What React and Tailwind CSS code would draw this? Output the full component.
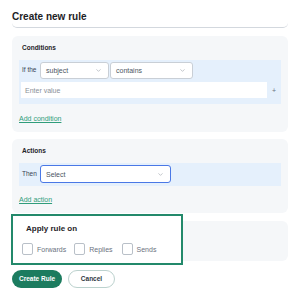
import React from "react";
import { ChevronDown } from "lucide-react";

const Select = ({ label, className = "" }) => (
  <div
    className={`flex h-[17px] items-center justify-between rounded-[3px] border border-[#c9cfd6] bg-white pl-[5px] pr-[6px] ${className}`}
  >
    <span className="text-[7px] leading-none text-[#4b5563]">{label}</span>
    <ChevronDown size={7} strokeWidth={2} className="text-[#9aa1a9]" />
  </div>
);

const Check = ({ label }) => (
  <label className="flex items-center gap-[4px]">
    <span className="h-[12px] w-[11px] rounded-[2px] border border-[#b9c0c8] bg-white" />
    <span className="text-[7px] leading-none text-[#6b7280]">{label}</span>
  </label>
);

const App = () => {
  return (
    <div className="h-[296px] w-[300px] bg-white px-3 font-['Liberation_Sans',Arial,sans-serif] text-[#1f2328]">
      {/* header */}
      <div className="h-[28px] rounded-b-[5px] border-b border-[#d3d8de] pt-[12px]">
        <h1 className="text-[10px] font-bold leading-[10px] text-[#1d2125]">
          Create new rule
        </h1>
      </div>

      {/* conditions */}
      <div className="mt-[8px] rounded-[6px] bg-[#f5f7f9] px-[7px] pb-[9px] pt-[8px]">
        <div className="pl-[3px] text-[6.5px] font-bold leading-[8px]">Conditions</div>
        <div className="mt-[8px] bg-[#e5f0fc] pb-[6px] pl-[2px] pt-[2px]">
          <div className="flex items-center">
            <span className="w-[19px] pl-[1px] text-[6.5px] leading-none text-[#374151]">If the</span>
            <Select label="subject" className="w-[69px]" />
            <Select label="contains" className="ml-[1px] w-[83px]" />
          </div>
          <div className="mt-[3px] flex items-center">
            <div className="flex h-[16px] w-[246px] items-center bg-white pl-[4px]">
              <span className="text-[7px] leading-none text-[#8a9099]">Enter value</span>
            </div>
            <span className="flex-1 text-center text-[7px] leading-none text-[#6b7280]">+</span>
          </div>
        </div>
        <div className="mt-[11px] text-[7px] leading-[8px] text-[#2f9d7b] underline underline-offset-[1px]">
          Add condition
        </div>
      </div>

      {/* actions */}
      <div className="mt-[7px] rounded-[6px] bg-[#f5f7f9] px-[7px] pb-[9px] pt-[8px]">
        <div className="pl-[3px] text-[6.5px] font-bold leading-[8px]">Actions</div>
        <div className="mt-[8px] flex h-[23px] items-start bg-[#e5f0fc] pl-[3px] pt-[2px]">
          <span className="w-[18px] pt-[6px] text-[6.5px] leading-none text-[#374151]">Then</span>
          <div className="flex h-[18px] w-[131px] items-center justify-between rounded-[3px] border-[1.5px] border-[#4a78e6] bg-white pl-[5px] pr-[6px]">
            <span className="text-[7px] leading-none text-[#4b5563]">Select</span>
            <ChevronDown size={7} strokeWidth={2} className="text-[#9aa1a9]" />
          </div>
        </div>
        <div className="mt-[10px] text-[7px] leading-[8px] text-[#2f9d7b] underline underline-offset-[1px]">
          Add action
        </div>
      </div>

      {/* apply rule on */}
      <div className="relative mt-[8px] h-[40px] rounded-[6px] bg-[#f5f7f9]">
        <div className="absolute left-[-1px] top-[-7px] h-[51px] w-[172px] border-2 border-[#23896b] bg-white px-[9px] pt-[8px]">
          <div className="pl-[4px] text-[8px] font-bold leading-[9px]">Apply rule on</div>
          <div className="mt-[10px] flex items-center gap-[8px]">
            <Check label="Forwards" />
            <Check label="Replies" />
            <div className="ml-px">
              <Check label="Sends" />
            </div>
          </div>
        </div>
      </div>

      {/* buttons */}
      <div className="mt-[9px] flex gap-[6px]">
        <button className="flex h-[18px] w-[50px] items-center justify-center rounded-full bg-[#1c7c5f] text-[6.5px] font-bold leading-none text-white">
          Create Rule
        </button>
        <button className="flex h-[18px] w-[47px] items-center justify-center rounded-full border border-[#bcd2ce] bg-white text-[6.5px] font-bold leading-none text-[#30383f]">
          Cancel
        </button>
      </div>
    </div>
  );
};

export default App;
